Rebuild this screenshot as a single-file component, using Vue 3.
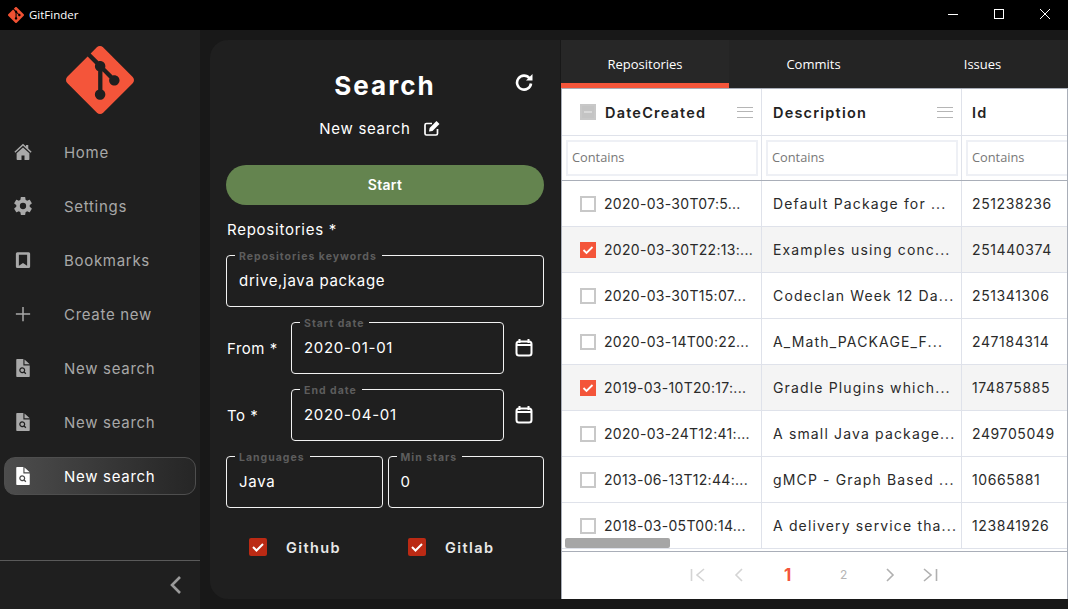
<script setup>
import { ref } from 'vue'

const gitLogo = 'M23.546 10.93L13.067.452c-.604-.603-1.582-.603-2.188 0L8.708 2.627l2.76 2.76c.645-.215 1.379-.07 1.889.441.516.515.658 1.258.438 1.9l2.658 2.66c.645-.223 1.387-.078 1.9.435.721.72.721 1.884 0 2.604-.719.719-1.881.719-2.6 0-.539-.541-.674-1.337-.404-1.996L12.86 8.955v6.525c.176.086.342.203.488.348.713.721.713 1.883 0 2.6-.719.721-1.889.721-2.609 0-.719-.719-.719-1.879 0-2.598.182-.18.387-.316.605-.406V8.835c-.217-.091-.424-.222-.6-.401-.545-.545-.676-1.342-.396-2.009L7.636 3.7.45 10.881c-.6.605-.6 1.584 0 2.189l10.48 10.477c.604.604 1.582.604 2.186 0l10.43-10.43c.605-.603.605-1.582 0-2.187'

const icons = {
  home: { d: 'M12 1 .5 11.500 1.800 13 12 3.800 22.200 13l1.300-1.500L19 7.400V2.500h-3v2.200zM12 6 3.500 13.800v7.700a1 1 0 0 0 1 1H10v-6h4v6h5.500a1 1 0 0 0 1-1v-7.700z' },
  gear: { vb: '2 2 20 20', d: 'M12,15.5A3.5,3.5 0 0,1 8.5,12A3.5,3.5 0 0,1 12,8.5A3.5,3.5 0 0,1 15.5,12A3.5,3.5 0 0,1 12,15.5M19.43,12.97C19.47,12.65 19.5,12.33 19.5,12C19.5,11.67 19.47,11.34 19.43,11L21.54,9.37C21.73,9.22 21.78,8.95 21.66,8.73L19.66,5.27C19.54,5.05 19.27,4.96 19.05,5.05L16.56,6.05C16.04,5.66 15.5,5.32 14.87,5.07L14.5,2.42C14.46,2.18 14.25,2 14,2H10C9.75,2 9.54,2.18 9.5,2.42L9.13,5.07C8.5,5.32 7.96,5.66 7.44,6.05L4.95,5.05C4.73,4.96 4.46,5.05 4.34,5.27L2.34,8.73C2.21,8.95 2.27,9.22 2.46,9.37L4.57,11C4.53,11.34 4.5,11.67 4.5,12C4.5,12.33 4.53,12.65 4.57,12.97L2.46,14.63C2.27,14.78 2.21,15.05 2.34,15.27L4.34,18.73C4.46,18.95 4.73,19.03 4.95,18.95L7.44,17.94C7.96,18.34 8.5,18.68 9.13,18.93L9.5,21.58C9.54,21.82 9.75,22 10,22H14C14.25,22 14.46,21.82 14.5,21.58L14.87,18.93C15.5,18.67 16.04,18.34 16.56,17.94L19.05,18.95C19.27,19.03 19.54,18.95 19.66,18.73L21.66,15.27C21.78,15.05 21.73,14.78 21.54,14.63L19.43,12.97Z' },
  book: { d: 'M4.500 1.500h15a2 2 0 0 1 2 2v17a2 2 0 0 1-2 2h-15a2 2 0 0 1-2-2v-17a2 2 0 0 1 2-2zM6.500 5v14.500l5.500-3.500 5.500 3.500V5z' },
  plus: { d: 'M11 2.500h2V11h8.500v2H13v8.500h-2V13H2.500v-2H11z' },
  file: { d: 'M3 1a1 1 0 0 1 1-1h8.500v8.500H21V23a1 1 0 0 1-1 1H4a1 1 0 0 1-1-1zM14 .5 21 7h-7zM11 11a4 4 0 1 0 2.200 7.300l2 2 1.200-1.200-2-2A4 4 0 0 0 11 11zm0 1.600a2.400 2.400 0 1 1 0 4.800 2.400 2.400 0 0 1 0-4.800z' },
}

const nav = [
  { label: 'Home', icon: 'home' },
  { label: 'Settings', icon: 'gear' },
  { label: 'Bookmarks', icon: 'book' },
  { label: 'Create new', icon: 'plus' },
  { label: 'New search', icon: 'file' },
  { label: 'New search', icon: 'file' },
  { label: 'New search', icon: 'file', active: true },
]

const tabs = ['Repositories', 'Commits', 'Issues']

const rows = ref([
  { date: '2020-03-30T07:5...', desc: 'Default Package for ...', id: '251238236' },
  { date: '2020-03-30T22:13:...', desc: 'Examples using conc...', id: '251440374', checked: true },
  { date: '2020-03-30T15:07...', desc: 'Codeclan Week 12 Da...', id: '251341306' },
  { date: '2020-03-14T00:22...', desc: 'A_Math_PACKAGE_F...', id: '247184314' },
  { date: '2019-03-10T20:17:...', desc: 'Gradle Plugins which...', id: '174875885', checked: true },
  { date: '2020-03-24T12:41:...', desc: 'A small Java package...', id: '249705049' },
  { date: '2013-06-13T12:44:...', desc: 'gMCP - Graph Based ...', id: '10665881' },
  { date: '2018-03-05T00:14...', desc: 'A delivery service tha...', id: '123841926' },
])
</script>

<template>
  <div class="window">
    <header class="titlebar">
      <svg class="title-logo" viewBox="0 0 24 24"><path :d="gitLogo" /></svg>
      <span class="title-text">GitFinder</span>
      <div class="win-controls">
        <svg width="12" height="12" viewBox="0 0 12 12"><path d="M1 6.500h10" stroke="#fff" /></svg>
        <svg width="12" height="12" viewBox="0 0 12 12"><rect x="1.500" y="1.500" width="9" height="9" fill="none" stroke="#fff" /></svg>
        <svg width="12" height="12" viewBox="0 0 12 12"><path d="M1 1l10 10M11 1L1 11" stroke="#fff" /></svg>
      </div>
    </header>

    <div class="body">
      <aside class="sidebar">
        <svg class="logo" viewBox="0 0 24 24"><path :d="gitLogo" /></svg>
        <nav class="nav">
          <div v-for="(item, i) in nav" :key="i" class="nav-item" :class="{ 'nav-item--active': item.active }">
            <svg class="nav-icon" :viewBox="icons[item.icon].vb || '0 0 24 24'"><path :d="icons[item.icon].d" fill-rule="evenodd" /></svg>
            <span>{{ item.label }}</span>
          </div>
        </nav>
        <div class="collapse">
          <svg width="16" height="20" viewBox="0 0 16 20"><path d="M12 2 4 10l8 8" fill="none" stroke="#9a9a9a" stroke-width="2.600" /></svg>
        </div>
      </aside>

      <main class="content">
        <section class="form">
          <div class="form-head">
            <h1>Search</h1>
            <svg class="refresh" viewBox="0 0 18 18"><path d="M14.500 5.200A7 7 0 1 0 16 10.500" fill="none" stroke="#fff" stroke-width="2.600" /><path d="M17.500 1v6.500H11z" fill="#fff" /></svg>
          </div>
          <div class="form-name">
            <span>New search</span>
            <svg width="16" height="16" viewBox="0 0 16 16"><path d="M13.500 9v4.500a1.500 1.500 0 0 1-1.500 1.500H2.500A1.500 1.500 0 0 1 1 13.500V5a1.500 1.500 0 0 1 1.500-1.500H8" fill="none" stroke="#fff" stroke-width="1.700" /><path d="M5 11.500 5.600 8 12.500 1l3 3-7 7z" fill="#fff" /></svg>
          </div>
          <button class="start">Start</button>
          <div class="section-label">Repositories *</div>
          <fieldset class="field">
            <legend>Repositories keywords</legend>
            <span>drive,java package</span>
          </fieldset>
          <div class="date-row">
            <label>From *</label>
            <fieldset class="field">
              <legend>Start date</legend>
              <span>2020-01-01</span>
            </fieldset>
            <svg class="cal" viewBox="0 0 18 18"><path d="M4.500 0v4M13.500 0v4" stroke="#fff" stroke-width="2" /><rect x="1.500" y="2.500" width="15" height="14" rx="2.500" fill="none" stroke="#fff" stroke-width="2" /><path d="M2 6h14" stroke="#fff" stroke-width="2" /></svg>
          </div>
          <div class="date-row">
            <label>To *</label>
            <fieldset class="field">
              <legend>End date</legend>
              <span>2020-04-01</span>
            </fieldset>
            <svg class="cal" viewBox="0 0 18 18"><path d="M4.500 0v4M13.500 0v4" stroke="#fff" stroke-width="2" /><rect x="1.500" y="2.500" width="15" height="14" rx="2.500" fill="none" stroke="#fff" stroke-width="2" /><path d="M2 6h14" stroke="#fff" stroke-width="2" /></svg>
          </div>
          <div class="pair">
            <fieldset class="field">
              <legend>Languages</legend>
              <span>Java</span>
            </fieldset>
            <fieldset class="field">
              <legend>Min stars</legend>
              <span>0</span>
            </fieldset>
          </div>
          <div class="sources">
            <div class="source">
              <span class="src-check"><svg width="18" height="18" viewBox="0 0 18 18"><path d="M4 9l3.500 3.500L14 6" fill="none" stroke="#fff" stroke-width="2" /></svg></span>
              <span>Github</span>
            </div>
            <div class="source">
              <span class="src-check"><svg width="18" height="18" viewBox="0 0 18 18"><path d="M4 9l3.500 3.500L14 6" fill="none" stroke="#fff" stroke-width="2" /></svg></span>
              <span>Gitlab</span>
            </div>
          </div>
        </section>

        <section class="results">
          <div class="tabs">
            <div v-for="(t, i) in tabs" :key="t" class="tab" :class="{ 'tab--active': i === 0 }">{{ t }}</div>
          </div>
          <div class="grid">
            <div class="grid-scroll">
              <div class="row row--head">
                <div class="cell cell--date">
                  <span class="box box--mixed"></span>
                  <b>DateCreated</b>
                  <span class="menu"></span>
                </div>
                <div class="cell cell--desc"><b>Description</b><span class="menu"></span></div>
                <div class="cell cell--id"><b>Id</b></div>
              </div>
              <div class="row row--filter">
                <div class="cell"><div class="filter">Contains</div></div>
                <div class="cell"><div class="filter">Contains</div></div>
                <div class="cell"><div class="filter">Contains</div></div>
              </div>
              <div v-for="r in rows" :key="r.id" class="row row--data" :class="{ 'row--selected': r.checked }">
                <div class="cell cell--date">
                  <span class="box" :class="{ 'box--on': r.checked }">
                    <svg v-if="r.checked" width="16" height="16" viewBox="0 0 16 16"><path d="M3.500 8l3 3 6-6" fill="none" stroke="#fff" stroke-width="1.800" /></svg>
                  </span>
                  <span>{{ r.date }}</span>
                </div>
                <div class="cell cell--desc"><span>{{ r.desc }}</span></div>
                <div class="cell cell--id"><span>{{ r.id }}</span></div>
              </div>
              <div class="scrollbar"></div>
            </div>
            <div class="pager">
              <svg class="pg-first" width="16" height="16" viewBox="0 0 16 16"><path d="M1.500 2v12M14 2 7 8l7 6" fill="none" stroke="#d4d4d4" stroke-width="1.600" /></svg>
              <svg class="pg-prev" width="16" height="16" viewBox="0 0 16 16"><path d="M11 2 5 8l6 6" fill="none" stroke="#d4d4d4" stroke-width="1.600" /></svg>
              <span class="page page--on">1</span>
              <span class="page page--two">2</span>
              <svg class="pg-next" width="16" height="16" viewBox="0 0 16 16"><path d="M5 2l6 6-6 6" fill="none" stroke="#b0b0b0" stroke-width="1.600" /></svg>
              <svg class="pg-last" width="16" height="16" viewBox="0 0 16 16"><path d="M2 2l7 6-7 6M14.500 2v12" fill="none" stroke="#b0b0b0" stroke-width="1.600" /></svg>
            </div>
          </div>
        </section>
      </main>
    </div>
  </div>
</template>

<style>
html, body { margin: 0; background: #181818; }
</style>

<style scoped>
.window {
  width: 1068px;
  height: 609px;
  overflow: hidden;
  display: flex;
  flex-direction: column;
  font-family: Inter, "Open Sans", sans-serif;
  background: #181818;
  color: #fff;
}

.titlebar {
  height: 30px;
  flex: none;
  box-sizing: border-box;
  background: #000;
  display: flex;
  align-items: center;
  padding: 0 0 1px 8px;
}
.title-logo { width: 16px; height: 16px; fill: #f05133; }
.title-text { margin-left: 5px; font: 11.500px "Open Sans", sans-serif; }
.win-controls { margin-left: auto; display: flex; gap: 34px; padding-right: 17px; padding-bottom: 1px; }

.body { flex: 1; display: flex; min-height: 0; }

.sidebar {
  width: 200px;
  flex: none;
  background: #1f1f1f;
  display: flex;
  flex-direction: column;
}
.logo { width: 68px; height: 68px; fill: #f4553a; align-self: center; margin-top: 16px; }
.nav { margin-top: 19px; display: flex; flex-direction: column; gap: 16px; padding: 0 4px; }
.nav-item {
  height: 38px;
  box-sizing: border-box;
  display: flex;
  align-items: center;
  padding-left: 9px;
  border: 1px solid transparent;
  border-radius: 11px;
  color: #a8a8a8;
  font-size: 15px;
  letter-spacing: 0.7px;
}
.nav-item span { margin-left: 32px; }
.nav-icon { width: 18px; height: 18px; fill: #a9a9a9; flex: none; }
.nav-item--active {
  color: #fff;
  border-color: #4e4e4e;
  background: linear-gradient(90deg, #4d4d4d, #2b2b2b 85%, #262626);
}
.nav-item--active .nav-icon { fill: #fff; }
.collapse {
  margin-top: auto;
  height: 48px;
  border-top: 1px solid #5a5a5a;
  display: flex;
  align-items: center;
  justify-content: flex-end;
  padding-right: 16px;
}

.content {
  flex: 1;
  display: flex;
  margin: 10px 0 10px 10px;
  min-width: 0;
}

.form {
  width: 350px;
  flex: none;
  box-sizing: border-box;
  background: #1f1f1f;
  border-radius: 18px 0 0 18px;
  padding: 0 16px;
  display: flex;
  flex-direction: column;
  font-size: 15px;
}
.form-head {
  position: relative;
  text-align: center;
  height: 72px;
}
.form-head h1 {
  margin: 0;
  padding-top: 28px;
  font-size: 26px;
  line-height: 36px;
  font-weight: 700;
  letter-spacing: 2px;
}
.refresh { position: absolute; right: 11px; top: 33px; width: 18px; height: 18px; }
.form-name {
  height: 32px;
  display: flex;
  align-items: center;
  justify-content: center;
  gap: 13px;
  padding-right: 11px;
  letter-spacing: 0.7px;
}
.start {
  display: block;
  width: 100%;
  height: 40px;
  margin-top: 21px;
  padding: 0 0 2px;
  border: none;
  border-radius: 20px;
  background: #64844f;
  color: #fff;
  font: 600 14px Inter, sans-serif;
  letter-spacing: 0.3px;
}
.section-label { margin-top: 14px; height: 22px; line-height: 22px; letter-spacing: 0.75px; flex: none; padding-left: 1px; }

.field {
  margin: 0;
  min-width: 0;
  box-sizing: border-box;
  height: 58px;
  border: 1px solid #f2f2f2;
  border-radius: 4px;
  padding: 3px 12px 0;
  flex: 1;
  display: block;
  font-size: 15px;
  letter-spacing: 0.7px;
  line-height: 34px;
}
.field legend {
  position: relative;
  top: 2px;
  padding: 0 5px 0 4px;
  margin-left: -4px;
  font-size: 10.500px;
  line-height: 12px;
  font-weight: 700;
  color: #5d5d5d;
  letter-spacing: 1px;
}
.section-label + .field { margin-top: 8px; flex: none; }

.date-row {
  display: flex;
  align-items: center;
  margin-top: 9px;
  flex: none;
}
.date-row label { width: 65px; flex: none; letter-spacing: 0.5px; padding-top: 6px; padding-left: 1px; box-sizing: border-box; }
.cal { width: 18px; height: 18px; margin: 5px 11px 0; flex: none; }
.pair { display: flex; gap: 5px; margin-top: 9px; flex: none; }
.sources { display: flex; margin-top: 30px; padding-left: 23px; flex: none; }
.source {
  width: 159px;
  flex: none;
  display: flex;
  align-items: center;
  gap: 19px;
  font-size: 14.500px;
  font-weight: 600;
  letter-spacing: 1.4px;
  color: #e8e8e8;
}
.src-check { width: 18px; height: 18px; border-radius: 2px; background: #bb2a14; display: block; }
.src-check svg { display: block; }

.results {
  flex: 1;
  min-width: 0;
  display: flex;
  flex-direction: column;
  margin-left: 1px;
}
.tabs { height: 48px; flex: none; display: flex; background: #242424; }
.tab {
  width: 169px;
  display: flex;
  align-items: center;
  justify-content: center;
  font: 13px "Open Sans", sans-serif;
  padding-bottom: 1px;
  box-sizing: border-box;
}
.tab--active { background: #272727; box-shadow: inset 0 -5px 0 #f4553a; width: 168px; padding-bottom: 0; }
.grid {
  flex: 1;
  min-height: 0;
  background: #fff;
  border: 1px solid #a9aeb8;
  border-bottom: none;
  display: flex;
  flex-direction: column;
  color: #2a2a2a;
  font-size: 14px;
  letter-spacing: 0.9px;
}
.grid-scroll {
  position: relative;
  height: 463px;
  overflow: hidden;
  flex: none;
  border-bottom: 1px solid #a9aeb8;
  box-sizing: border-box;
}
.row { display: grid; grid-template-columns: 200px 200px 200px; border-bottom: 1px solid #dfe2ea; box-sizing: border-box; }
.row--head { height: 47px; }
.row--filter { height: 45px; border-bottom-color: #a9aeb8; }
.row--data { height: 46px; }
.row--selected { background: #f4f4f4; }
.cell {
  display: flex;
  align-items: center;
  padding-left: 11px;
  border-right: 1px solid #dfe2ea;
  white-space: nowrap;
  overflow: hidden;
  position: relative;
}
.cell--date { padding-left: 18px; letter-spacing: 0.3px; }
.cell--desc { letter-spacing: 1.15px; }
.cell--id { letter-spacing: 0.6px; padding-left: 10px; }
.row--filter .cell { padding: 0 3px 0 4px; }
.row--head b { font-weight: 600; color: #222; font-size: 14.500px; letter-spacing: 1.2px; }
.filter {
  flex: 1;
  height: 36px;
  box-sizing: border-box;
  border: 2px solid #eef0f5;
  font: 12.800px "Open Sans", sans-serif;
  letter-spacing: 0;
  color: #777;
  line-height: 30px;
  padding-left: 4px;
}
.box {
  width: 16px;
  height: 16px;
  flex: none;
  box-sizing: border-box;
  border: 2px solid #c8c8c8;
  margin-right: 8px;
  display: block;
}
.box--mixed { background: #c4c4c4; position: relative; margin-right: 9px; }
.box--mixed::after { content: ""; position: absolute; left: 2px; right: 2px; top: 5px; height: 2px; background: #d9d9d9; }
.box--on { background: #f4553a; border: none; }
.box--on svg { display: block; }
.menu {
  position: absolute;
  right: 8px;
  top: 50%;
  margin-top: -5px;
  width: 16px;
  height: 9px;
  border-top: 1px solid #b5b5b5;
  border-bottom: 1px solid #b5b5b5;
}
.menu::after { content: ""; display: block; height: 1px; margin-top: 3px; background: #b5b5b5; }
.scrollbar {
  position: absolute;
  left: 3px;
  top: 449px;
  width: 105px;
  height: 10px;
  border-radius: 2px;
  background: #a6a6a6;
}
.pager {
  flex: 1;
  display: flex;
  align-items: center;
  padding: 0 0 2px 128px;
}
.pager svg { flex: none; }
.pg-prev { margin-left: 25px; }
.page { width: 20px; text-align: center; flex: none; font-size: 12px; color: #b5b5b5; }
.page--on { margin-left: 31px; font-size: 17px; font-weight: 700; color: #f4553a; }
.page--two { margin-left: 36px; }
.pg-next { margin-left: 28px; }
.pg-last { margin-left: 24px; }
</style>
